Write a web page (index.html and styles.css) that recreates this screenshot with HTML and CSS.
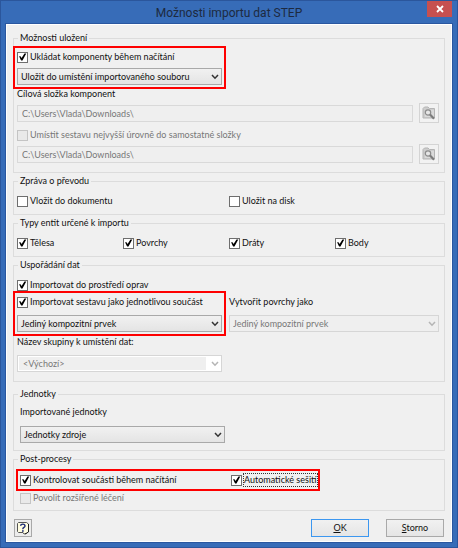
FILE: index.html
```
<!DOCTYPE html>
<html lang="cs">
<head>
    <meta charset="UTF-8">
    <title>Možnosti importu dat STEP</title>
    <link rel="stylesheet" href="styles.css">
</head>
<body>
<!-- shared icons -->
<svg class="defs" aria-hidden="true">
    <symbol id="arrow" viewBox="0 0 8 6">
        <path d="M1 1 L4 4.2 L7 1" fill="none" stroke="currentColor" stroke-width="1.5"/>
    </symbol>
    <symbol id="browse" viewBox="0 0 14 14">
        <path d="M1 12 V2.5 L2.5 1 H6 L7.5 2.5 H12.5 V12 Z" fill="#cdcdcd" stroke="#b4b4b4"/>
        <path d="M3 4 H12 V11 H3 Z" fill="#dadada"/>
        <circle cx="6" cy="6.5" r="2.7" fill="#e6e6e6" stroke="#8c8c8c" stroke-width="1.2"/>
        <path d="M8 8.5 L12 12.7" stroke="#7c7c7c" stroke-width="2.2"/>
    </symbol>
</svg>

<form class="dialog">
    <div class="titlebar">
        <h1>Možnosti importu dat STEP</h1>
        <button type="button" class="close" aria-label="Zavřít">
            <svg viewBox="0 0 8 8"><path d="M1 1 L7 7 M7 1 L1 7" stroke="#fff" stroke-width="1.8"/></svg>
        </button>
    </div>

    <div class="client">
        <fieldset class="storage">
            <legend>Možnosti uložení</legend>
            <div class="group marked">
                <label class="check"><input type="checkbox" checked>Ukládat komponenty během načítání</label>
                <div class="select">
                    <select aria-label="Umístění komponent"><option>Uložit do umístění importovaného souboru</option></select>
                    <svg><use href="#arrow"/></svg>
                </div>
            </div>
            <label class="caption" for="target">Cílová složka komponent</label>
            <div class="path">
                <input type="text" id="target" value="C:\Users\Vlada\Downloads\" disabled>
                <button type="button" class="browse" aria-label="Procházet" disabled><svg><use href="#browse"/></svg></button>
            </div>
            <label class="check off"><input type="checkbox" disabled>Umístit sestavu nejvyšší úrovně do samostatné složky</label>
            <div class="path">
                <input type="text" value="C:\Users\Vlada\Downloads\" aria-label="Složka sestavy" disabled>
                <button type="button" class="browse" aria-label="Procházet" disabled><svg><use href="#browse"/></svg></button>
            </div>
        </fieldset>

        <fieldset class="row">
            <legend>Zpráva o převodu</legend>
            <div class="cols two">
                <label class="check"><input type="checkbox">Vložit do dokumentu</label>
                <label class="check"><input type="checkbox">Uložit na disk</label>
            </div>
        </fieldset>

        <fieldset class="row">
            <legend>Typy entit určené k importu</legend>
            <div class="cols four">
                <label class="check"><input type="checkbox" checked>Tělesa</label>
                <label class="check"><input type="checkbox" checked>Povrchy</label>
                <label class="check"><input type="checkbox" checked>Dráty</label>
                <label class="check"><input type="checkbox" checked>Body</label>
            </div>
        </fieldset>

        <fieldset class="row layout">
            <legend>Uspořádání dat</legend>
            <label class="check"><input type="checkbox" checked>Importovat do prostředí oprav</label>
            <div class="split">
                <div class="group marked">
                    <label class="check"><input type="checkbox" checked>Importovat sestavu jako jednotlivou součást</label>
                    <div class="select">
                        <select aria-label="Typ součásti"><option>Jediný kompozitní prvek</option></select>
                        <svg><use href="#arrow"/></svg>
                    </div>
                </div>
                <div class="group">
                    <label class="caption" for="surfaces">Vytvořit povrchy jako</label>
                    <div class="select off">
                        <select id="surfaces" disabled><option>Jediný kompozitní prvek</option></select>
                        <svg><use href="#arrow"/></svg>
                    </div>
                </div>
            </div>
            <label class="caption" for="groupname">Název skupiny k umístění dat:</label>
            <div class="select off combo">
                <select id="groupname" disabled><option>&lt;Výchozí&gt;</option></select>
                <svg><use href="#arrow"/></svg>
            </div>
        </fieldset>

        <fieldset class="units">
            <legend>Jednotky</legend>
            <label class="caption" for="units">Importované jednotky</label>
            <div class="select">
                <select id="units"><option>Jednotky zdroje</option></select>
                <svg><use href="#arrow"/></svg>
            </div>
        </fieldset>

        <fieldset class="post">
            <legend>Post-procesy</legend>
            <div class="cols two marked">
                <label class="check"><input type="checkbox" checked>Kontrolovat součásti během načítání</label>
                <label class="check"><input type="checkbox" checked><span class="focused">Automatické sešití</span></label>
            </div>
            <label class="check off"><input type="checkbox" disabled>Povolit rozšířené léčení</label>
        </fieldset>

        <div class="footer">
            <button type="button" class="help" aria-label="Nápověda">
                <svg viewBox="0 0 14 14">
                    <path d="M2.5 1.5 H10.5 L12.5 3 V10.5 L10.5 12.5 L8 13 L7 11.5 H2.5 L1.5 10.5 V2.5 Z" fill="#fffde0" stroke="#555"/>
                    <path d="M12.5 3 V11 L9 13" fill="none" stroke="#222"/>
                    <path d="M4.6 4.8 C4.6 2.6 9 2.6 9 4.9 C9 6.5 6.8 6.3 6.8 8.2" fill="none" stroke="#1c2a78" stroke-width="1.4"/>
                    <path d="M6 9.2 H7.7 V10.8 H6 Z" fill="#1c2a78"/>
                </svg>
            </button>
            <button type="button" class="btn default"><u>O</u>K</button>
            <button type="button" class="btn"><u>S</u>torno</button>
        </div>
    </div>
</form>
</body>
</html>
```
FILE: styles.css
```
* {
    box-sizing: border-box;
}
body {
    margin: 0;
    background: #376cb8;
    font-family: Lato, "Liberation Sans", sans-serif;
    font-size: 9px;
    line-height: 14px;
    color: #111;
}
.defs {
    display: none;
}
input, select, button {
    font: inherit;
    color: inherit;
    margin: 0;
    padding: 0;
    border-radius: 0;
    appearance: none;
}

/* window frame */
.dialog {
    display: flex;
    flex-direction: column;
    min-height: 100vh;
    padding: 0 5px 5px;
    background: #376cb8;
    border: 1px solid #2b569c;
}
.titlebar {
    position: relative;
    height: 23px;
}
.titlebar h1 {
    margin: 0;
    font: 12px/25px Roboto, "Noto Sans", sans-serif;
    text-align: center;
    color: #1d2a40;
}
.close {
    position: absolute;
    top: 0;
    right: 0;
    width: 25px;
    height: 16px;
    border: 0;
    background: #c75050;
}
.close svg {
    display: block;
    width: 8px;
    height: 8px;
    margin: 0 auto;
}
.client {
    flex: 1;
    padding: 6px 6px 4px;
    background: #f0f0f0;
    border: 1px solid #fff;
    box-shadow: 0 0 0 1px #2a57a0;
}

/* groups */
fieldset {
    min-width: 0;
    margin: 0 0 1px;
    padding: 5px 3px;
    border: 1px solid #dcdcdc;
}
legend {
    height: 14px;
    margin-left: 1px;
    padding: 0 2px;
}
.row {
    padding-top: 6px;
    padding-bottom: 6px;
}
.storage {
    padding-bottom: 8px;
}
.layout {
    margin-bottom: 5px;
    padding-bottom: 9px;
}
.units {
    padding: 4px 6px 7px;
}
.post {
    padding: 7px 6px 5px;
}
.units legend, .post legend {
    margin-left: -2px;
}
.marked {
    outline: 2px solid #fe0000;
    outline-offset: 2px;
}
.group {
    width: 205px;
}
.cols {
    display: grid;
}
.two {
    grid-template-columns: 1fr 1fr;
}
.four {
    grid-template-columns: repeat(4, 1fr);
}
.split {
    display: grid;
    grid-template-columns: 205px 1fr;
    gap: 7px;
    margin-top: 3px;
    padding-right: 2px;
}
.split .group {
    width: auto;
}
.post .marked {
    width: 296px;
    grid-template-columns: 211px 1fr;
}
.post .off {
    margin-top: 4px;
}

/* controls */
.check {
    display: flex;
    align-items: center;
    height: 14px;
    gap: 2px;
    white-space: nowrap;
}
.check input {
    flex: none;
    width: 11px;
    height: 11px;
    background: #fff;
    border: 1px solid #6e6e6e;
}
.check input:checked::after {
    content: "";
    display: block;
    width: 9px;
    height: 9px;
    background: #000;
    clip-path: polygon(12% 42%, 28% 42%, 40% 62%, 72% 12%, 92% 12%, 50% 88%, 34% 88%);
}
.check input:disabled {
    background: #e9e9e9;
    border-color: #c4c4c4;
}
.off {
    color: #777;
}
.focused {
    line-height: 12px;
    outline: 1px dotted #333;
}
.caption {
    display: block;
    height: 14px;
    margin-top: 2px;
    white-space: nowrap;
}
.group .caption, .units .caption {
    margin-top: 0;
}
.split + .caption {
    margin-top: 3px;
}
.select {
    position: relative;
    width: 205px;
    height: 17px;
    margin-top: 4px;
}
.select select {
    display: block;
    width: 100%;
    height: 100%;
    padding: 0 16px 0 3px;
    background: linear-gradient(#f1f1f1, #e4e4e4);
    border: 1px solid #a9a9a9;
}
.split .select {
    width: auto;
    margin-top: 6px;
}
.select select:disabled {
    background: #efefef;
    border-color: #d6d6d6;
    opacity: 1;
}
.select svg {
    position: absolute;
    top: 6px;
    right: 3px;
    width: 8px;
    height: 6px;
    color: #333;
    pointer-events: none;
}
.off.select svg {
    color: #b5b5b5;
}
.combo {
    margin-top: 6px;
}
.combo select:disabled {
    padding-left: 5px;
    border-color: #d6d6d6;
    background: linear-gradient(#efefef, #efefef) 1px 1px / 187px 13px no-repeat #fff;
}
.units .select {
    margin-top: 7px;
}
.path {
    display: flex;
    align-items: center;
    gap: 6px;
    height: 20px;
    margin-top: 2px;
    padding-right: 2px;
}
.path + .check {
    margin-top: 5px;
}
.path input {
    flex: 1;
    min-width: 0;
    height: 17px;
    padding: 0 4px;
    color: #777;
    background: #efefef;
    border: 1px solid #d9d9d9;
}
.browse {
    width: 20px;
    height: 20px;
    background: #f2f2f2;
    border: 1px solid #d4d4d4;
}
.browse svg {
    display: block;
    width: 14px;
    height: 14px;
    margin: 0 auto;
}

/* bottom buttons */
.footer {
    display: flex;
    gap: 17px;
    padding: 7px 1px 0;
}
.help {
    width: 18px;
    height: 18px;
    margin-right: auto;
    background: #ececec;
    border: 1px solid #a9a9a9;
}
.help svg {
    display: block;
    width: 14px;
    height: 14px;
    margin: 0 auto;
}
.btn {
    width: 58px;
    height: 18px;
    background: linear-gradient(#f1f1f1, #e5e5e5);
    border: 1px solid #a9a9a9;
}
.default {
    border-color: #3c97f0;
}
```
